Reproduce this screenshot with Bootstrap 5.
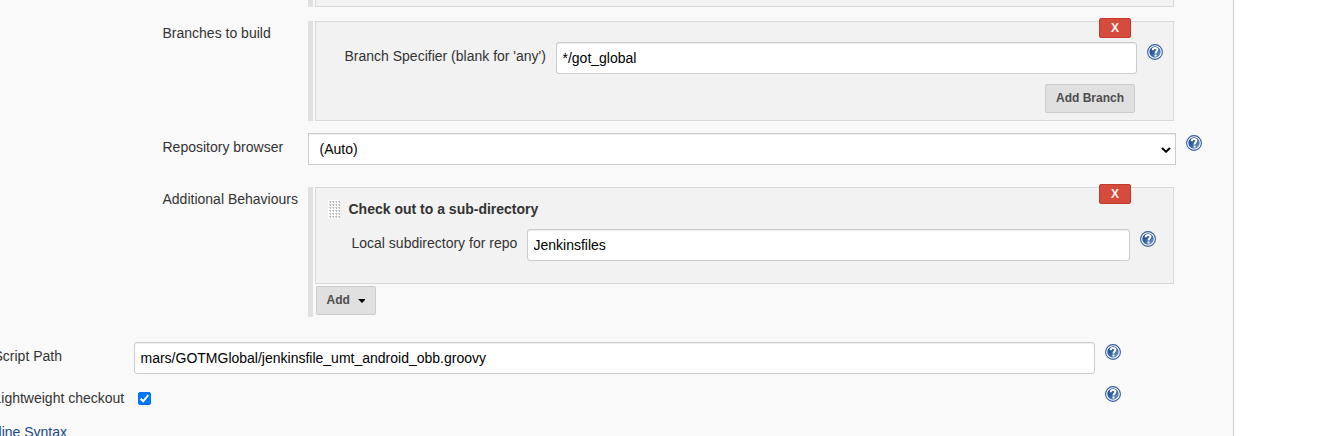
<!DOCTYPE html>
<html lang="en">
<head>
<meta charset="utf-8">
<title>Pipeline configuration</title>
<link rel="stylesheet" href="https://cdn.jsdelivr.net/npm/bootstrap@5.3.0/dist/css/bootstrap.min.css">
<style>
body{font:14px/20px "Liberation Sans",Arial,sans-serif;color:#333;background:#fff;height:436px}
.config{width:1234px;height:436px;background:#f9f9f9;border-right:1px solid #ccc}
.scm{padding-left:162.500px}
.field-label{width:145.500px;white-space:nowrap}
.chunk{width:866px;border-left:5px solid #e0e0e0;padding-left:2px}
.panel{position:relative;width:859px;background:#f2f2f2;border:1px solid #d9d9d9}
.form-control,.form-select{font:14px/18px "Liberation Sans",Arial,sans-serif;color:#000;height:32px;min-height:0;padding:6px 5px 6px 5.500px;border:1px solid #ccc;border-radius:3px;box-shadow:inset 0 1px 1px rgba(0,0,0,.075)}
.form-select{border-radius:0;padding-left:10.500px;background:#fff url("data:image/svg+xml,%3Csvg xmlns='http://www.w3.org/2000/svg' viewBox='0 0 10 6'%3E%3Cpath d='M1 .9 5 4.7 9 .9' fill='none' stroke='%23000' stroke-width='2'/%3E%3C/svg%3E") no-repeat right 4px top 13px/10px 6px}
.help{width:16px;height:16px;margin:2px 0 0 10px;flex:none}
.grey-btn{font:bold 12px/15px "Liberation Sans",Arial,sans-serif;color:#4d4d4d;background:#e0e0e0;border:1px solid #ccc;border-radius:2px;height:29px;padding:0 10px}
.remove{position:absolute;top:-4px;right:42px;width:32px;height:20px;padding:0;font:bold 12px/18px "Liberation Sans",Arial,sans-serif;color:#f2f2f2;background:#d54c3c;border:1px solid #c3392b;border-radius:2px}
.handle{width:12px;height:19px}
.outer{margin-left:-6.500px}
.outer-label{width:140.500px;white-space:nowrap}
.form-check-input{width:13px;height:13px;margin:8px 0 0 4px;border-radius:2px!important}
.form-check-input:checked{background-color:#0075ff;border-color:#0075ff;background-size:13px 13px;background-image:url("data:image/svg+xml,%3Csvg xmlns='http://www.w3.org/2000/svg' viewBox='0 0 13 13'%3E%3Cpath d='M2.700 6.800 5.200 9.300 10.300 3.200' fill='none' stroke='%23fff' stroke-width='2'/%3E%3C/svg%3E")}
.syntax{color:#204a87}
</style>
</head>
<body class="overflow-hidden">
<svg class="position-absolute" width="0" height="0">
  <defs>
    <linearGradient id="blue" x1="0" y1="0" x2="1" y2="1"><stop offset="0" stop-color="#164080"/><stop offset=".5" stop-color="#3465a4"/><stop offset="1" stop-color="#84a6d0"/></linearGradient>
    <pattern id="dots" width="3" height="3" patternUnits="userSpaceOnUse"><path d="M1 1h2v1H1z" fill="#c8c8c8"/><path d="M2 1h1v2H2z" fill="#b8b8b8"/></pattern>
  </defs>
  <symbol id="q" viewBox="0 0 16 16">
    <circle cx="8" cy="8" r="7.4" fill="#fff" stroke="#305c9c" stroke-width="1.1"/>
    <circle cx="8" cy="8" r="5.700" fill="url(#blue)"/>
    <path d="M5.700 6.200C5.700 4.500 6.700 3.900 8 3.900s2.400.7 2.400 1.900C10.400 7.300 8.500 7.300 8.500 9.500" fill="none" stroke="#fff" stroke-width="2"/>
    <path d="M7.500 10.500h2v2h-2z" fill="#fff"/>
  </symbol>
</svg>
<main class="config overflow-hidden">
  <section class="scm">
    <div class="d-flex" style="height:7px"><div class="field-label"></div><div class="chunk d-flex"><div class="panel border-top-0"></div></div></div>

    <div class="d-flex" style="margin-top:14px">
      <label class="field-label" style="padding-top:2px">Branches to build</label>
      <div class="chunk">
        <div class="panel" style="height:100px;padding:20px 10px 0 28.500px">
          <button class="btn remove">X</button>
          <div class="d-flex">
            <label style="width:211.500px;padding-top:4px" class="text-nowrap">Branch Specifier (blank for 'any')</label>
            <input class="form-control" style="width:581px" value="*/got_global"><svg class="help"><use href="#q"/></svg>
          </div>
          <div class="d-flex justify-content-end" style="padding:10px 28px 0 0"><button class="btn grey-btn">Add Branch</button></div>
        </div>
      </div>
    </div>

    <div class="d-flex" style="margin-top:12px">
      <label class="field-label" style="padding-top:4px">Repository browser</label>
      <select class="form-select" style="width:868px"><option>(Auto)</option></select><svg class="help"><use href="#q"/></svg>
    </div>

    <div class="d-flex" style="margin-top:22px">
      <label class="field-label" style="padding-top:2px">Additional Behaviours</label>
      <div class="chunk" style="height:130px">
        <div class="panel" style="height:97px;padding:11px 17px 0 12px">
          <button class="btn remove">X</button>
          <div class="d-flex align-items-center fw-bold"><svg class="handle"><path d="M0 0h12v19H0z" fill="#fff"/><path d="M0 0h12v19H0z" fill="url(#dots)"/></svg><span style="margin-left:8.500px">Check out to a sub-directory</span></div>
          <div class="d-flex" style="margin:10px 0 0 23.500px">
            <label style="width:175.500px;padding-top:4px" class="text-nowrap">Local subdirectory for repo</label>
            <input class="form-control" style="width:603px" value="Jenkinsfiles"><svg class="help"><use href="#q"/></svg>
          </div>
        </div>
        <button class="btn grey-btn d-flex align-items-center" style="margin:2px 0 0 1px;width:60px;padding-left:9.500px">Add<svg width="8" height="4" style="margin:1px 0 0 8.500px"><path d="M0 0h8L4 4z"/></svg></button>
      </div>
    </div>
  </section>

  <section class="outer">
    <div class="d-flex" style="margin-top:25px">
      <label class="outer-label" style="padding-top:4px">Script Path</label>
      <input class="form-control" style="width:961px" value="mars/GOTMGlobal/jenkinsfile_umt_android_obb.groovy"><svg class="help"><use href="#q"/></svg>
    </div>
    <div class="d-flex" style="margin-top:10px;height:32px">
      <label class="outer-label" style="padding-top:4px">Lightweight checkout</label>
      <div class="d-flex" style="width:961px"><input class="form-check-input" type="checkbox" checked></div><svg class="help"><use href="#q"/></svg>
    </div>
    <div style="margin:6px 0 0 -23px"><a class="syntax text-decoration-none" href="#">Pipeline Syntax</a></div>
  </section>
</main>
<script src="https://cdn.jsdelivr.net/npm/bootstrap@5.3.0/dist/js/bootstrap.bundle.min.js"></script>
</body>
</html>
